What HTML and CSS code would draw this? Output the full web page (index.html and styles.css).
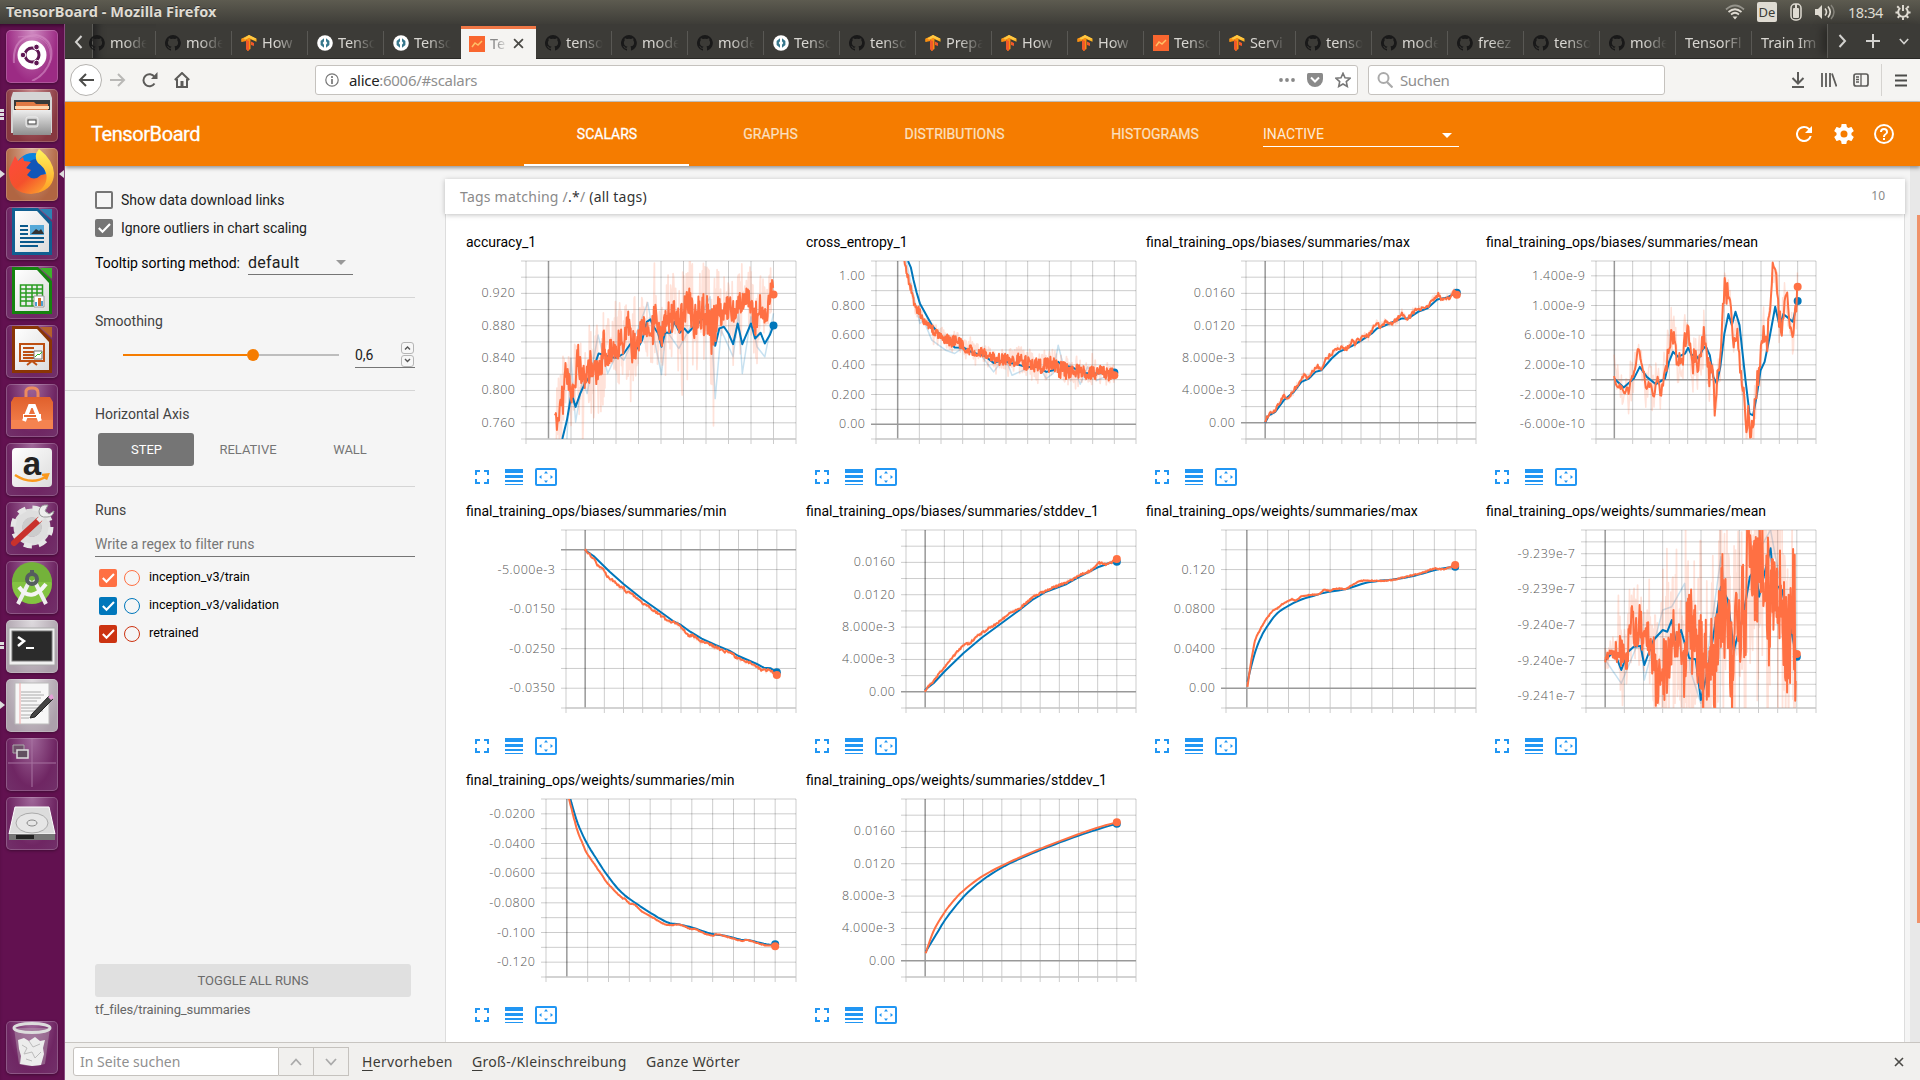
FILE: index.html
```html
<!DOCTYPE html>
<html lang="de">
<head>
<meta charset="utf-8">
<title>TensorBoard</title>
<link rel="stylesheet" href="styles.css">
</head>
<body>
<svg class="defs" aria-hidden="true">
  <defs>
    <symbol id="gh" viewBox="0 0 16 16"><path fill="#191919" d="M8 0a8 8 0 0 0-2.5 15.6c.4.1.5-.2.5-.4v-1.500c-2.200.5-2.700-.9-2.700-.9-.4-.9-.9-1.200-.9-1.200-.7-.5.1-.5.1-.5.8.1 1.200.8 1.200.8.7 1.200 1.900.9 2.300.7.1-.5.3-.9.500-1.100-1.800-.2-3.600-.9-3.600-4 0-.9.300-1.600.8-2.100-.1-.2-.4-1 .1-2.100 0 0 .7-.2 2.200.8a7.600 7.600 0 0 1 4 0c1.500-1 2.200-.8 2.200-.8.4 1.100.2 1.900.1 2.100.5.6.8 1.300.8 2.100 0 3.100-1.900 3.700-3.700 3.900.3.300.6.800.6 1.500v2.200c0 .2.100.5.600.4A8 8 0 0 0 8 0z"/></symbol>
    <symbol id="tf" viewBox="0 0 16 16"><path fill="#ffb420" d="M8 0l7.500 3.800v3L8 3.500.5 6.800v-3z"/><path fill="#fb8c10" d="M.5 3.800L5.500 2v4L.5 7zM6 3l3.500-1.500V14L6 16z"/><path fill="#f1592a" d="M5 5l3 1v10l-3-1.600zM10 6.500l3 1.500v3l-3-1z"/><path fill="#ffc843" d="M8 0l7.500 3.800-3 .9L8 2.700 5 4.500 2 4z"/></symbol>
    <symbol id="so" viewBox="0 0 16 16"><circle cx="8" cy="8" r="7.800" fill="#fff"/><path d="M7 3.300L3.600 6v4L7 12.700V9.800L5.700 8 7 6.200zM9 3.300L12.400 6v4L9 12.700V9.800L10.300 8 9 6.200z" fill="#37778c"/></symbol>
    <symbol id="tb" viewBox="0 0 16 16"><path d="M0 0h16v16H0z" fill="#f9662f"/><path d="M3 11l3-4 3 2 4-4" fill="none" stroke="#ffc067" stroke-width="1.500"/></symbol>
    <symbol id="full" viewBox="0 0 14 14"><path fill="#2196f3" d="M0 9h2v3h3v2H0zM2 5H0V0h5v2H2zm10 7V9h2v5H9v-2zM9 0h5v5h-2V2H9z"/></symbol>
    <symbol id="rows" viewBox="0 0 18 16"><path fill="#2196f3" d="M0 0h18v4H0zM0 6h18v3H0zM0 11h18v2H0zM0 15h18v1H0z"/></symbol>
    <symbol id="fit" viewBox="0 0 22 18"><rect x="1" y="1" width="20" height="16" rx="1" fill="none" stroke="#2196f3" stroke-width="2"/><path fill="#2196f3" d="M11 3l2 2.500H9zM11 15l2-2.500H9zM4 9l2.500-2v4zM18 9l-2.500-2v4z"/></symbol>
    <symbol id="tick" viewBox="0 0 18 18"><rect width="18" height="18" rx="2" fill="currentColor"/><path d="M3.800 9l3.700 3.700L15 4.900" fill="none" stroke="#fff" stroke-width="2.100"/></symbol>
    <linearGradient id="grey" x2="0" y2="1"><stop stop-color="#eee"/><stop offset="1" stop-color="#8f8f8f"/></linearGradient>
    <linearGradient id="paper" x2="1" y2="1"><stop stop-color="#fff"/><stop offset="1" stop-color="#dcdcdc"/></linearGradient>
    <linearGradient id="bag" x2="0" y2="1"><stop stop-color="#e0602c"/><stop offset="1" stop-color="#f58350"/></linearGradient>
    <linearGradient id="fox" x2="1" y2="1"><stop stop-color="#ff4a3d"/><stop offset=".5" stop-color="#f4512c"/><stop offset="1" stop-color="#ffb92e"/></linearGradient>
    <linearGradient id="tail" x2="0" y2="1"><stop stop-color="#fff45c"/><stop offset="1" stop-color="#ff9e22"/></linearGradient>
  </defs>
</svg>

<header class="panel">
  <span class="panel-title">TensorBoard - Mozilla Firefox</span>
  <div class="tray">
    <svg width="20" height="16" viewBox="0 0 20 16" fill="none" stroke-width="1.700"><path d="M1 5.500q9-8 18 0" stroke="#96948c"/><path d="M3.500 8q6.500-5.500 13 0M6 10.500q4-3.500 8 0" stroke="#dfdbd2"/><path d="M7.500 12.500h5L10 15.500z" fill="#dfdbd2"/></svg>
    <span class="lang">De</span>
    <svg width="12" height="18" viewBox="0 0 12 18"><rect x="1" y="1" width="10" height="16" rx="4" fill="none" stroke="#dfdbd2" stroke-width="1.500"/><rect x="3" y="5" width="6" height="10" rx="1" fill="#dfdbd2"/><path d="M6 1v7" stroke="#dfdbd2" stroke-width="2"/></svg>
    <svg class="speaker" width="20" height="16" viewBox="0 0 20 16"><path d="M0 5h3l4-4v14l-4-4H0z" fill="#dfdbd2"/><path d="M10 4.500q3 3.500 0 7M13 2.500q4.500 5.500 0 11" stroke="#dfdbd2" fill="none" stroke-width="1.600"/><path d="M16 1q6 7 0 14" stroke="#85837b" fill="none" stroke-width="1.500"/></svg>
    <span class="clock">18:34</span>
    <svg width="16" height="18" viewBox="0 0 18 18" fill="none" stroke="#dfdbd2"><path d="M6 4.500a5.400 5.400 0 1 0 6 0M9 1v7" stroke-width="2.200"/><path d="M4.500 4.500l-2-2M13.500 4.500l2-2M3.500 9.500H.5M14.500 9.500h3M5 13.500l-2 2M13 13.500l2 2M9 15v3" stroke-width="2.200"/></svg>
  </div>
</header>

<div class="desktop">
<aside class="launcher">
  <div class="tile t-ubuntu"><svg viewBox="0 0 52 52"><path d="M8 34Q6 8 30 6q18 4 15 24Q40 46 26 52" fill="none" stroke="#d58fc6" stroke-opacity=".6" stroke-width="2"/><path d="M12 8Q48 2 44 34" fill="none" stroke="#d58fc6" stroke-opacity=".5"/><circle cx="26" cy="26" r="14.500" fill="#fff"/><circle cx="26" cy="26" r="7" fill="none" stroke="#5e1653" stroke-width="3"/><g fill="#5e1653" stroke="#fff"><circle cx="17" cy="26" r="2.800"/><circle cx="30.500" cy="18" r="2.800"/><circle cx="30.500" cy="34" r="2.800"/></g></svg></div>
  <div class="tile t-files run3"><svg viewBox="0 0 52 52"><path d="M7 4h37l2 6v35H5V10z" fill="#d5d5d5"/><path d="M8 12h36v10H8z" fill="#393939"/><path d="M10 14h18l2 2h12v7H10z" fill="#e07a45"/><path d="M9 18h34v3H9z" fill="#ffd7b0"/><path d="M7 22h38v25H7z" fill="url(#grey)"/><rect x="20" y="29" width="12" height="10" rx="2" fill="#ccc" stroke="#eee"/><rect x="22" y="32" width="8" height="4" fill="#fff" stroke="#444"/></svg></div>
  <div class="tile t-firefox active"><svg viewBox="0 0 52 52"><circle cx="27" cy="24" r="18" fill="#0a84e0"/><path d="M24 14q10-6 15 6 2 12-11 16-10-2-10-10z" fill="#1256b8"/><path d="M5 18l4-9 3 5 5-4 1 4 7 1-5 6 5 2-4 5q7 7 14 0l5-1q3-14 4-12 6 10 0 20-6 11-19 12Q5 46 3 28q-1-6 2-10z" fill="url(#fox)"/><path d="M33 2q14 11 15 24 0 16-17 20 12-9 9-20-2-6-8-10-5-7 1-14z" fill="url(#tail)"/></svg></div>
  <div class="tile t-dark"><svg viewBox="0 0 52 52"><path d="M6 2h26l14 14v33H6z" fill="#115f91"/><path d="M9 5h22l12 13v28H9z" fill="url(#paper)"/><path d="M34 3h12v11z" fill="#2d83b3"/><path d="M14 20h8M14 24h8M14 28h8M14 32h24M14 36h24M14 40h18" stroke="#0b5a8c" stroke-width="2"/><path d="M24 19h14v10H24z" fill="#56a9d8"/><path d="M25 28l5-5 3 2 2-2 3 5z" fill="#333"/></svg></div>
  <div class="tile t-dark"><svg viewBox="0 0 52 52"><path d="M6 2h26l14 14v33H6z" fill="#15830f"/><path d="M9 5h22l12 13v28H9z" fill="url(#paper)"/><path d="M34 3h12v11z" fill="#3db22b"/><path d="M14.500 20h22v21h-22zM14 24h23M14 28h23M14 32h23M14 36h23M20 20v21M26 20v21M31 20v21" fill="none" stroke="#2a9c22" stroke-width="1.500"/><path d="M28 31h10v11H28z" fill="#fff" stroke="#999"/><path d="M29 37h2v4h-2zM35 36h2v5h-2z" fill="#4b9fd0"/><path d="M32 33h3v8h-3z" fill="#d36b2f"/></svg></div>
  <div class="tile t-dark"><svg viewBox="0 0 52 52"><path d="M6 2h26l14 14v33H6z" fill="#8a3505"/><path d="M9 5h22l12 13v28H9z" fill="url(#paper)"/><path d="M34 3h12v11z" fill="#b4622b"/><path d="M14 20h24v17H14zM21 41l5-4 5 4" fill="none" stroke="#bd4f12" stroke-width="2"/><path d="M17 24h11M17 28h11M17 31h11M17 34h11" stroke="#bd4f12" stroke-width="2"/><path d="M28 27h8v8h-8z" fill="#fff" stroke="#777"/><path d="M29 33l3-3 1 1 3-3" stroke="#3b3" fill="none"/></svg></div>
  <div class="tile t-dark"><svg viewBox="0 0 52 52"><path d="M20 15V8q1-3 5-3h2q5 0 5 5v5" fill="none" stroke="#ec8b5f" stroke-width="3"/><path d="M8 14h36l3 5v27H5V19z" fill="url(#bag)"/><path d="M5 37h42v9H5z" fill="#f58350"/><path d="M18 38l6-15h4l6 15" fill="none" stroke="#fff" stroke-width="4"/><path d="M17 33h18" stroke="#fff" stroke-width="4"/><path d="M18 33h12" stroke="#e7692f" stroke-width="2"/></svg></div>
  <div class="tile t-dark"><svg viewBox="0 0 52 52"><rect x="6" y="6" width="40" height="39" rx="4" fill="url(#paper)"/><text x="26" y="33" class="amazon">a</text><path d="M9 33q17 11 32 1M36 33l6-.500-2 5" fill="none" stroke="#f9981c" stroke-width="2.500"/></svg></div>
  <div class="tile t-dark"><svg viewBox="0 0 52 52"><circle cx="26" cy="26" r="14" fill="none" stroke="#dedede" stroke-width="9"/><circle cx="26" cy="26" r="19" fill="none" stroke="#e6e6e6" stroke-width="5" stroke-dasharray="8 6.900"/><circle cx="26" cy="26" r="10" fill="#ccc"/><path d="M8 42L33 19" stroke="#c9312b" stroke-width="6" stroke-linecap="round"/><path d="M32 20l6-6" stroke="#e8e8e8" stroke-width="5"/><path d="M42 4q-8-1-9 6 0 7 8 6 6 0 7-6l-5 3-4-3z" fill="#eee" stroke="#999"/></svg></div>
  <div class="tile t-dark"><svg viewBox="0 0 52 52"><circle cx="26" cy="24" r="20" fill="#83c341"/><path d="M6 22a20 20 0 0 1 40 0z" fill="#74b23a"/><path d="M12 44l12-24M40 44L28 20" stroke="#eee" stroke-width="4"/><path d="M13 27q12 17 27-3" fill="none" stroke="#f5f5f5" stroke-width="4"/><circle cx="26" cy="19" r="5" fill="none" stroke="#555d5f" stroke-width="4"/><path d="M26 10v5" stroke="#555d5f" stroke-width="4"/></svg></div>
  <div class="tile t-light run2"><svg viewBox="0 0 52 52"><rect x="3" y="9" width="46" height="37" fill="#efefef" stroke="#aaa"/><rect x="6" y="12" width="40" height="30" fill="#2b2b2b" stroke="#777"/><path d="M12 18l6 4-6 5" fill="none" stroke="#fff" stroke-width="2.500"/><path d="M20 29h8" stroke="#fff" stroke-width="2"/></svg></div>
  <div class="tile t-light run1"><svg viewBox="0 0 52 52"><path d="M9 5h34v41H9z" fill="#f7f7f7" stroke="#bbb"/><path d="M15 14h20M15 17h23M15 20h20M15 23h16M15 27h24M15 30h20M15 33h22M15 37h12M15 40h8" stroke="#aaa"/><path d="M14 5v41" stroke="#f1a7a7"/><path d="M26 36L43 18l4 3-18 18-5 1z" fill="#444" stroke="#222"/><path d="M42 19l4-3 2 4-3 2z" fill="#e69fd8"/></svg></div>
  <div class="tile t-dark"><svg viewBox="0 0 52 52"><path d="M26 2v48M2 26h48" stroke="#a673a0"/><path d="M7 8h11v8H7z" fill="#70506b" stroke="#aaa"/><path d="M11 13h11v8H11z" fill="#625060" stroke="#ddd" stroke-width="1.500"/></svg></div>
  <div class="tile t-dark"><svg viewBox="0 0 52 52"><path d="M9 11h34l6 27H3z" fill="#dcdcdc" stroke="#fff"/><path d="M3 38h46v6H3z" fill="#777"/><path d="M10 39h18v4H10z" fill="#222"/><ellipse cx="26" cy="27" rx="16" ry="10" fill="#e6e6e6" stroke="#aaa"/><ellipse cx="26" cy="27" rx="5" ry="3" fill="none" stroke="#888"/></svg></div>
  <div class="tile t-dark trash"><svg viewBox="0 0 52 52"><path d="M8 8l5 36q13 4 26 0l5-36z" fill="#b7a3b4" fill-opacity=".45"/><ellipse cx="26" cy="8" rx="18" ry="4.500" fill="none" stroke="#ddd" stroke-width="3"/><path d="M12 20l6-2 5 3 6-4 5 4 5-1-2 8 1 6-3 11-9 1-12-2 1-8-2-7z" fill="#ececec"/><path d="M16 25l5 3-3 6 8-2 3 6 6-6M23 21l4 6 7-3M20 39l6 2" fill="none" stroke="#bbb"/></svg></div>
</aside>

<div class="window">
  <nav class="tabs">
    <div class="tab-end"><svg width="9" height="14" viewBox="0 0 9 14"><path d="M7.500 1L2 7l5.500 6" fill="none" stroke="#d3d2cf" stroke-width="2"/></svg></div>
    <div class="tab clip"><svg><use href="#gh"/></svg><span>mode</span></div>
    <div class="tab"><svg><use href="#gh"/></svg><span>mode</span></div>
    <div class="tab"><svg><use href="#tf"/></svg><span>How</span></div>
    <div class="tab"><svg><use href="#so"/></svg><span>Tenso</span></div>
    <div class="tab last"><svg><use href="#so"/></svg><span>Tenso</span></div>
    <div class="tab on"><svg><use href="#tb"/></svg><span>Te</span><svg class="x" viewBox="0 0 10 10"><path d="M1 1l8 8M9 1L1 9" stroke="#4b4a46" stroke-width="1.600"/></svg></div>
    <div class="tab"><svg><use href="#gh"/></svg><span>tenso</span></div>
    <div class="tab"><svg><use href="#gh"/></svg><span>mode</span></div>
    <div class="tab"><svg><use href="#gh"/></svg><span>mode</span></div>
    <div class="tab"><svg><use href="#so"/></svg><span>Tenso</span></div>
    <div class="tab"><svg><use href="#gh"/></svg><span>tenso</span></div>
    <div class="tab"><svg><use href="#tf"/></svg><span>Prepa</span></div>
    <div class="tab"><svg><use href="#tf"/></svg><span>How</span></div>
    <div class="tab"><svg><use href="#tf"/></svg><span>How</span></div>
    <div class="tab"><svg><use href="#tb"/></svg><span>Tenso</span></div>
    <div class="tab"><svg><use href="#tf"/></svg><span>Servi</span></div>
    <div class="tab"><svg><use href="#gh"/></svg><span>tenso</span></div>
    <div class="tab"><svg><use href="#gh"/></svg><span>mode</span></div>
    <div class="tab"><svg><use href="#gh"/></svg><span>freez</span></div>
    <div class="tab"><svg><use href="#gh"/></svg><span>tenso</span></div>
    <div class="tab"><svg><use href="#gh"/></svg><span>mode</span></div>
    <div class="tab"><span>TensorFl</span></div>
    <div class="tab"><span>Train Im</span></div>
    <div class="tab-tools">
      <svg width="9" height="14" viewBox="0 0 9 14"><path d="M1.500 1L7 7l-5.500 6" fill="none" stroke="#d3d2cf" stroke-width="2"/></svg>
      <svg width="14" height="14" viewBox="0 0 14 14"><path d="M7 0v14M0 7h14" stroke="#d3d2cf" stroke-width="2"/></svg>
      <svg width="10" height="7" viewBox="0 0 10 7"><path d="M.8 1L5 5.500 9.200 1" fill="none" stroke="#d3d2cf" stroke-width="1.600"/></svg>
    </div>
  </nav>

  <div class="toolbar">
    <div class="back"><svg width="16" height="14" viewBox="0 0 16 14"><path d="M16 7H2M8 1L2 7l6 6" fill="none" stroke="#4c4c4a" stroke-width="2"/></svg></div>
    <svg class="nav-ic" width="16" height="14" viewBox="0 0 16 14"><path d="M0 7h14M8 1l6 6-6 6" fill="none" stroke="#b9b8b6" stroke-width="2"/></svg>
    <svg class="nav-ic" width="16" height="16" viewBox="0 0 16 16"><path d="M12.500 11.500A6 6 0 1 1 12.500 5" fill="none" stroke="#5c5b59" stroke-width="2"/><path d="M15.500 0v7H9z" fill="#5c5b59"/></svg>
    <svg class="nav-ic" width="16" height="16" viewBox="0 0 16 16"><path d="M0.800 8L8 1l7.200 7M3 7v8h10V7" fill="none" stroke="#5c5b59" stroke-width="2"/><path d="M6.500 9h3v6h-3z" fill="#5c5b59"/></svg>
    <div class="url">
      <svg width="14" height="14" viewBox="0 0 14 14"><circle cx="7" cy="7" r="6.200" fill="none" stroke="#777" stroke-width="1.200"/><path d="M7 6v5M7 3v2" stroke="#777" stroke-width="1.700"/></svg>
      <span class="address"><b>alice</b>:6006/#scalars</span>
      <svg width="16" height="4" viewBox="0 0 16 4"><g fill="#888"><circle cx="2" cy="2" r="1.900"/><circle cx="8" cy="2" r="1.900"/><circle cx="14" cy="2" r="1.900"/></g></svg>
      <svg width="16" height="14" viewBox="0 0 16 14"><path d="M1.500 0h13q1.500 0 1.500 1.500V6A8 8 0 0 1 0 6V1.500Q0 0 1.500 0z" fill="#8a8a8a"/><path d="M4 4.500L8 8.500l4-4" fill="none" stroke="#fff" stroke-width="2"/></svg>
      <svg width="16" height="16" viewBox="0 0 16 16"><path d="M8 1.300l2 4.500 5 .5-3.700 3.300 1 4.900L8 12l-4.300 2.500 1-4.900L1 6.300l5-.5z" fill="none" stroke="#777" stroke-width="1.600"/></svg>
    </div>
    <div class="search">
      <svg width="16" height="16" viewBox="0 0 16 16"><circle cx="6.500" cy="6" r="5" fill="none" stroke="#aaa" stroke-width="2"/><path d="M10 10l5.500 5.500" stroke="#aaa" stroke-width="2.200"/></svg>
      <span>Suchen</span>
    </div>
    <div class="tb-right">
      <svg width="14" height="16" viewBox="0 0 14 16"><path d="M7 0v11M1.500 6L7 11.500 12.500 6M1 15h12" fill="none" stroke="#5c5b59" stroke-width="2"/></svg>
      <svg width="16" height="14" viewBox="0 0 16 14"><path d="M1 0v14M5 0v14M9 0v14M11 .5L15.500 13.500" fill="none" stroke="#5c5b59" stroke-width="1.800"/></svg>
      <svg width="16" height="14" viewBox="0 0 16 14"><rect x="1" y="1" width="14" height="12" rx="2" fill="none" stroke="#5c5b59" stroke-width="1.700"/><path d="M8 1v12M3 4h3M3 6.500h3M3 9h3" stroke="#5c5b59" stroke-width="1.300"/></svg>
      <i class="sep"></i>
      <svg width="12" height="13" viewBox="0 0 12 13"><path d="M0 1.500h12M0 6.500h12M0 11.500h12" stroke="#4c4c4a" stroke-width="2"/></svg>
    </div>
  </div>

  <div class="app-bar">
    <h1>TensorBoard</h1>
    <div class="app-tab sel"><span>SCALARS</span></div>
    <div class="app-tab w2"><span>GRAPHS</span></div>
    <div class="app-tab w3"><span>DISTRIBUTIONS</span></div>
    <div class="app-tab w4"><span>HISTOGRAMS</span></div>
    <div class="inactive"><span>INACTIVE</span><i></i></div>
    <div class="app-icons">
      <svg width="16" height="16" viewBox="4 4 16 16"><path fill="#fff" d="M17.650 6.350A7.958 7.958 0 0 0 12 4a8 8 0 1 0 7.730 10h-2.080A6 6 0 1 1 12 6c1.660 0 3.140.690 4.220 1.780L13 11h7V4z"/></svg>
      <svg width="20" height="20" viewBox="2 2 20 20"><path fill="#fff" d="M19.430 12.980c.040-.320.070-.640.070-.980s-.030-.660-.070-.980l2.110-1.650c.190-.150.240-.420.120-.640l-2-3.460c-.120-.220-.390-.300-.610-.220l-2.490 1c-.520-.400-1.080-.730-1.690-.980l-.380-2.650A.488.488 0 0 0 14 2h-4c-.250 0-.460.180-.490.420l-.380 2.650c-.610.250-1.170.590-1.690.980l-2.490-1c-.230-.090-.490 0-.610.220l-2 3.460c-.130.220-.070.490.120.640l2.110 1.650c-.040.320-.070.650-.070.980s.030.660.070.980l-2.110 1.650c-.190.150-.240.420-.120.640l2 3.460c.120.220.390.300.610.220l2.490-1c.520.400 1.080.730 1.690.980l.380 2.650c.030.240.240.420.490.420h4c.250 0 .460-.180.490-.420l.380-2.650c.610-.250 1.170-.590 1.690-.980l2.490 1c.230.090.490 0 .610-.220l2-3.460c.120-.220.070-.490-.120-.640zM12 15.500a3.500 3.500 0 1 1 0-7 3.500 3.500 0 0 1 0 7z"/></svg>
      <svg width="20" height="20" viewBox="2 2 20 20"><path fill="#fff" d="M11 18h2v-2h-2zm1-16a10 10 0 1 0 0 20 10 10 0 0 0 0-20zm0 18a8 8 0 1 1 0-16 8 8 0 0 1 0 16zm0-14a4 4 0 0 0-4 4h2c0-1.100.900-2 2-2s2 .900 2 2c0 2-3 1.750-3 5h2c0-2.250 3-2.500 3-5a4 4 0 0 0-4-4z"/></svg>
    </div>
  </div>

  <div class="app-body">
    <aside class="side">
      <section class="sec opts">
        <label class="check"><i class="box"></i><span class="ls1">Show data download links</span></label>
        <label class="check"><svg class="gray"><use href="#tick"/></svg><span class="ls2">Ignore outliers in chart scaling</span></label>
        <div class="sort"><span>Tooltip sorting method:</span><div class="dd">default<i></i></div></div>
      </section>
      <section class="sec smooth">
        <h2>Smoothing</h2>
        <div class="slide-row">
          <div class="slider"><div class="slider-fill"></div><div class="knob"></div><div class="slider-rest"></div></div>
          <div class="num"><span>0,6</span><div class="spin"><svg viewBox="0 0 13 12"><rect x=".5" y=".5" width="12" height="11" rx="2.500" fill="#f7f7f7" stroke="#b5b5b5"/><path d="M4 7.500L6.500 5 9 7.500" fill="none" stroke="#555" stroke-width="1.400"/></svg><svg viewBox="0 0 13 12"><rect x=".5" y=".5" width="12" height="11" rx="2.500" fill="#f7f7f7" stroke="#b5b5b5"/><path d="M4 4L6.500 6.500 9 4" fill="none" stroke="#555" stroke-width="1.400"/></svg></div></div>
        </div>
      </section>
      <section class="sec axis">
        <h2>Horizontal Axis</h2>
        <div class="btns"><span class="btn step">STEP</span><span class="btn rel">RELATIVE</span><span class="btn wall">WALL</span></div>
      </section>
      <section class="runs">
        <h2>Runs</h2>
        <div class="regex">Write a regex to filter runs</div>
        <div class="run c1"><svg><use href="#tick"/></svg><i></i><span>inception_v3/train</span></div>
        <div class="run c2"><svg><use href="#tick"/></svg><i></i><span>inception_v3/validation</span></div>
        <div class="run c3"><svg><use href="#tick"/></svg><i></i><span>retrained</span></div>
      </section>
      <div class="toggle">TOGGLE ALL RUNS</div>
      <div class="logdir">tf_files/training_summaries</div>
    </aside>
    <main class="main">
      <div class="tag-head"><span class="tag-name">Tags matching /<b>.*</b>/ <b>(all tags)</b></span><span class="count">10</span></div>
      <div class="cards" id="cards"></div>
    </main>
    <div class="scroll"><div class="thumb"></div></div>
  </div>

  <footer class="find">
    <div class="find-in">In Seite suchen</div>
    <div class="find-btn"><svg width="12" height="8" viewBox="0 0 12 8"><path d="M1 7l5-5.500L11 7" fill="none" stroke="#aaa" stroke-width="1.800"/></svg></div>
    <div class="find-btn"><svg width="12" height="8" viewBox="0 0 12 8"><path d="M1 1l5 5.500L11 1" fill="none" stroke="#aaa" stroke-width="1.800"/></svg></div>
    <span class="f1"><u>H</u>ervorheben</span><span class="f2"><u>G</u>roß-/Kleinschreibung</span><span class="f3">Ganze <u>W</u>örter</span>
    <svg class="find-x" width="10" height="10" viewBox="0 0 10 10"><path d="M1 1l8 8M9 1L1 9" stroke="#4b4a46" stroke-width="1.600"/></svg>
  </footer>
</div>
</div>
<script src="charts.js"></script>
</body>
</html>
```
FILE: styles.css
```css
* { box-sizing: border-box; }
body { margin: 0; width: 1920px; height: 1080px; overflow: hidden; font-family: Roboto, sans-serif; background: #f5f5f5; }
.defs { position: absolute; width: 0; height: 0; }
svg { display: block; flex: none; }
i { font-style: normal; display: block; }

.panel { height: 24px; display: flex; justify-content: space-between; align-items: center; padding: 0 9px 0 6px; background: linear-gradient(#5d5b50, #3e3d38); font-family: "Noto Sans", sans-serif; color: #dfdbd2; }
.panel-title { font-weight: 700; font-size: 14.500px; letter-spacing: .08px; text-shadow: 0 -1px #333; line-height: 22px; padding-bottom: 2px; }
.tray { display: flex; align-items: center; font-size: 14px; }
.lang { width: 20px; height: 20px; margin: 0 13px 0 12px; border-radius: 2px; background: #dfdbd2; color: #3c3b37; text-align: center; line-height: 20px; font-size: 13px; }
.speaker { margin-left: 13px; }
.clock { margin: 0 12px 0 13px; font-size: 14.500px; letter-spacing: -.4px; padding-bottom: 1px; }

.desktop { display: flex; height: 1056px; }
.launcher { width: 65px; padding: 6px 0 6px 6px; display: flex; flex-direction: column; gap: 6px; background: #621150; border-right: 1px solid #8a4a80; box-shadow: inset 0 4px 5px -3px #2a0522; }
.tile { position: relative; width: 52px; height: 53px; flex: none; border-radius: 5px; box-shadow: inset 0 0 0 1px rgba(255,255,255,.2), 0 1px 3px rgba(0,0,0,.35); }
.tile svg { width: 52px; height: 52px; margin-top: -1px; }
.t-dark { background: radial-gradient(ellipse at 50% 0, #a0689a, #6f2663 65%, #72316a); }
.t-ubuntu { background: radial-gradient(ellipse at 50% 0, #d08bc2, #9c2b84 70%); }
.t-files { background: radial-gradient(ellipse at 50% 0, #c78a8c, #873840 75%); }
.t-firefox { background: radial-gradient(ellipse at 50% 0, #dcb29a, #b06542 75%); }
.t-light { background: radial-gradient(ellipse at 50% 0, #dedade, #aca0ab 80%); }
.trash { margin-top: auto; }
.tile::before { position: absolute; left: -6px; top: 20px; color: #ddd; }
.run3::before, .run2::before { content: ""; width: 4px; height: 11px; background: repeating-linear-gradient(#ddd 0 3px, transparent 3px 4px); }
.run2::before { height: 7px; top: 22px; }
.active::before, .run1::before { content: ""; border: solid transparent; border-width: 4px 0 4px 5px; border-left-color: #ddd; top: 22px; }
.active::after { content: ""; position: absolute; right: -6px; top: 22px; border: solid transparent; border-width: 4px 5px 4px 0; border-right-color: #ddd; }
.amazon { font: 700 33px "Liberation Sans", sans-serif; text-anchor: middle; fill: #222; }

.window { width: 1855px; display: flex; flex-direction: column; }
.tabs { height: 35px; display: flex; background: #3c3b37; font-family: "Noto Sans", sans-serif; font-size: 14.500px; color: #d8d6d1; border-bottom: 1px solid #2a2926; }
.tab-end { width: 28px; padding: 11px 0 0 9px; border-right: 1px solid #5b5a56; }
.tab { width: 76px; height: 34px; padding: 3px 0 0 9px; display: flex; align-items: center; gap: 6px; flex: none; background: linear-gradient(#595854, #595854) no-repeat; background-size: 1px 24px; background-position: right 0 top 7px; }
.tab svg { width: 16px; height: 16px; }
.tab span { width: 38px; margin-top: -2px; margin-left: -1px; letter-spacing: -.1px; white-space: nowrap; -webkit-mask-image: linear-gradient(90deg, #000 35%, transparent 97%); mask-image: linear-gradient(90deg, #000 35%, transparent 97%); }
.tab span:first-child { width: 62px; margin-left: 0; -webkit-mask-image: linear-gradient(90deg, #000 60%, transparent 98%); mask-image: linear-gradient(90deg, #000 60%, transparent 98%); }
.tab.clip { width: 63px; padding-left: 0; box-shadow: inset 10px 0 8px -6px #222; }
.tab.clip svg { margin-left: -4px; }
.tab.last { width: 77px; background: none; }
.tab.on { width: 75px; background: #f5f4f2; border-top: 3px solid #f07746; margin-top: 2px; height: 33px; padding: 0 0 1px 8px; color: #888; }
.tab.on span { width: 18px; }
.tab.on .x { width: 11px; height: 11px; margin-left: -1px; }
.tab-tools { flex: 1; margin-left: -1px; border-left: 1px solid #5b5a56; display: flex; align-items: center; justify-content: space-between; padding: 0 11px 0 10px; box-shadow: -8px 0 8px -3px #2b2a27; }

.toolbar { height: 43px; display: flex; align-items: center; background: #f5f4f2; border-bottom: 1px solid #c8c5c1; padding-left: 5px; font-family: "Noto Sans", sans-serif; }
.back { width: 32px; height: 32px; border: 1px solid #b5b3b0; border-radius: 50%; background: #fff; display: grid; place-items: center; }
.nav-ic { margin-left: 8px; margin-right: 8px; }
.url { margin-left: 117px; width: 1043px; height: 30px; border: 1px solid #c5c2be; border-radius: 3px; background: #fff; display: flex; align-items: center; padding: 0 6px 0 9px; font-size: 15px; gap: 12px; }
.address { flex: 1; margin-left: -2px; color: #8f8f8f; letter-spacing: -.3px; }
.address b { font-weight: 400; color: #222; }
.search { margin-left: 10px; width: 297px; height: 30px; border: 1px solid #c5c2be; border-radius: 3px; background: #fff; display: flex; align-items: center; gap: 7px; padding-left: 8px; color: #8f8f8f; font-size: 15px; letter-spacing: -.4px; }
.tb-right { margin-left: auto; padding-right: 13px; display: flex; align-items: center; gap: 16px; }
.sep { width: 1px; height: 32px; background: #d5d3d0; margin: 0 -3px 0 -4px; }

.app-bar { position: relative; z-index: 2; height: 64px; display: flex; background: #f57c00; color: #fff; box-shadow: 0 2px 4px rgba(0,0,0,.4); padding-left: 26px; }
h1 { margin: 0; width: 433px; font-weight: 400; -webkit-text-stroke: .3px #fff; font-size: 20px; letter-spacing: -.42px; line-height: 64px; }
.app-tab { width: 165px; text-align: center; font-size: 14px; line-height: 64px; font-weight: 400; color: #fbe0c2; -webkit-text-stroke: .2px #fbe0c2; padding-left: 1px; }
.sel { color: #fff; border-bottom: 2px solid #fff; -webkit-text-stroke: .3px #fff; height: 64px; }
.w2 { width: 162px; } .w3 { width: 206px; } .w4 { width: 195px; }
.inactive { margin: 20px 0 0 11px; width: 196px; height: 25px; border-bottom: 1px solid #fff; display: flex; justify-content: space-between; align-items: center; padding-right: 7px; font-size: 14px; color: #fdebd8; }
.inactive i { border: solid transparent; border-width: 5px 5px 0; border-top-color: #fff; margin-top: 2px; }
.app-icons { margin-left: auto; padding-right: 26px; display: flex; align-items: center; gap: 20px; }
.app-icons svg:first-child { margin-right: 2px; }

.app-body { flex: 1; display: flex; min-height: 0; background: #f5f5f5; }
.side { width: 380px; padding-top: 25px; color: #212121; display: flex; flex-direction: column; font-size: 14px; }
.sec { width: 350px; border-bottom: 1px solid #d5d5d5; padding-left: 30px; }
h2 { margin: 0; font-size: 14px; line-height: 16px; font-weight: 400; color: #424242; }
.opts { height: 107px; }
.check { display: flex; height: 18px; align-items: center; gap: 8px; margin-bottom: 10px; }
.check svg { width: 18px; height: 18px; color: #757575; }
.ls1 { letter-spacing: .04px; } .ls2 { letter-spacing: -.06px; }
.box { width: 18px; height: 18px; border: 2px solid #757575; border-radius: 2px; }
.sort { display: flex; align-items: flex-end; gap: 10px; color: #000; margin-top: 11px; }
.sort > span { width: 143px; white-space: nowrap; line-height: 16px; padding-bottom: 4px; height: 20px; }
.dd { width: 105px; height: 27px; border-bottom: 1px solid #757575; font-size: 16px; line-height: 25px; color: #212121; display: flex; justify-content: space-between; align-items: center; padding: 2px 7px 0 0; letter-spacing: .25px; }
.dd i { border: solid transparent; border-width: 5px 5px 0; border-top-color: #999; }
.smooth { height: 93px; padding-top: 15px; }
.slide-row { display: flex; height: 26px; margin-top: 13px; }
.slider { width: 216px; margin: 0 16px 0 28px; display: flex; align-items: center; }
.slider-fill { width: 124px; height: 2px; background: #f57c00; }
.knob { width: 12px; height: 12px; border-radius: 50%; background: #f57c00; }
.slider-rest { flex: 1; height: 2px; background: #bdbdbd; }
.num { width: 60px; height: 26px; border-bottom: 1px solid #757575; display: flex; justify-content: space-between; line-height: 26px; }
.spin { width: 14px; }
.spin svg { width: 13px; height: 12px; margin-bottom: 1px; }
.axis { height: 96px; padding-top: 15px; }
.btns { display: flex; margin: 11px 0 0 3px; height: 33px; font-size: 13px; color: #757575; line-height: 33px; text-align: center; }
.btn { width: 96px; }
.step { background: #757575; color: #fff; border-radius: 3px; padding-left: 1px; }
.rel { width: 108px; } .wall { width: 96px; }
.runs { padding: 15px 0 0 30px; }
.regex { width: 320px; height: 31px; margin: 8px 0 12px; border-bottom: 1px solid #757575; line-height: 33px; color: #777; padding-top: 2px; letter-spacing: -.02px; }
.run { display: flex; align-items: center; height: 18px; margin: 0 0 10px 4px; font-size: 12.600px; color: #000; }
.run svg { width: 18px; height: 18px; }
.run i { width: 16px; height: 16px; border: 1.500px solid; border-radius: 50%; margin: 0 9px 0 7px; flex: none; }
.run span { color: #000; padding-bottom: 3px; }
.c1 { color: #ff7043; } .c2 { color: #0077bb; } .c3 { color: #cc3311; }
.toggle { margin: auto 0 0 30px; width: 316px; height: 33px; flex: none; border-radius: 3px; background: #e0e0e0; color: #6b6b6b; text-align: center; line-height: 33px; font-size: 13px; }
.logdir { margin: 5px 0 24px 30px; font-size: 13px; line-height: 16px; color: #666; letter-spacing: -.12px; }

.main { width: 1460px; display: flex; flex-direction: column; padding-top: 13px; }
.tag-head { position: relative; height: 35px; flex: none; background: #fff; box-shadow: 0 1px 5px rgba(0,0,0,.25); display: flex; justify-content: space-between; align-items: center; padding: 0 20px 0 15px; font-family: "Noto Sans", sans-serif; font-size: 14px; color: #8a8a8a; letter-spacing: .23px; }
.tag-head b { font-weight: 400; color: #333; }
.count { font-size: 12px; padding-bottom: 3px; letter-spacing: 0; }
.cards { flex: 1; background: #fff; border: solid #ddd; border-width: 0 1px; display: grid; grid-template-columns: repeat(4, 340px); grid-auto-rows: 269px; align-content: start; padding: 20px 0 0 20px; }
.card h3 { margin: 0 0 10px; font-size: 14px; font-weight: 400; line-height: 17px; color: #000; white-space: nowrap; }
.plot { width: 334px; height: 186px; margin-bottom: 21px; overflow: visible; }
.plot text { font: 300 12.500px "Open Sans", sans-serif; text-anchor: end; fill: #555; letter-spacing: .5px; }
.acts { display: flex; align-items: center; padding-left: 9px; }
.acts .a { width: 14px; height: 14px; } .acts .b { width: 18px; height: 16px; margin: 0 12px 0 16px; } .acts .c { width: 22px; height: 18px; }
.scroll { width: 10px; margin-left: auto; background: #e8e8e8; }
.thumb { width: 3px; height: 708px; margin: 49px 0 0 7px; background: #f0926a; }

.find { height: 38px; border-top: 1px solid #c8c5c1; background: #f1f0ee; display: flex; align-items: center; padding-left: 8px; font-family: "Noto Sans", sans-serif; font-size: 14px; color: #3c3b37; }
.find-in { width: 206px; height: 29px; border: 1px solid #c5c2be; border-radius: 3px 0 0 3px; background: #fff; color: #909090; line-height: 28px; padding-left: 6px; letter-spacing: .02px; }
.find-btn { width: 35px; height: 29px; border: 1px solid #c5c2be; border-left: 0; display: grid; place-items: center; }
.find u { text-underline-offset: 3px; }
.f1 { margin-left: 13px; width: 110px; letter-spacing: .34px; } .f2 { width: 174px; letter-spacing: .28px; } .f3 { width: 120px; letter-spacing: .3px; }
.f1, .f2, .f3 { white-space: nowrap; }
.find-x { margin: 0 16px 0 auto; }
```
FILE: charts.js
```js
// Each chart: title, left edge of the plot, number of y intervals, y tick labels
// by interval index, index of the zero line, data extent and its series.
const P = s => s.trim().split(/\s+/).map(p => p.split(',').map(Number));
const OR = '#ff7043', BL = '#0077bb';
const charts = [
{ t: 'accuracy_1', l: 60, n: 11, lab: {2:'0.920',4:'0.880',6:'0.840',8:'0.800',10:'0.760'}, f: [187,243,775,776], pale: 3.3, min: 190,
  paleB: P('276,776 285,535 295,725 310,600 320,640 344,465 365,580 385,520 400,540 430,450 452,367 465,470 482,583 492,450 520,505 545,440 570,400 588,350 599,655 612,450 638,530 650,400 658,580 677,410 690,500 707,530 726,400'),
  blue: P('266,776 276,720 286,640 295,680 305,640 315,610 325,590 335,560 345,520 360,525 370,532 385,532 400,520 415,490 430,505 440,480 450,425 458,418 465,440 475,460 482,500 490,458 502,458 510,425 522,458 532,445 540,458 552,440 562,430 575,410 588,395 594,430 599,497 608,445 618,440 628,460 638,492 648,430 658,492 677,430 686,475 698,458 707,490 718,465 726,436'),
  env: P('250,700,840 252,650,800 258,640,730 264,620,720 268,600,710 274,515,600 280,570,640 287,620,675 293,590,650 300,480,580 310,530,635 320,560,620 326,500,610 332,550,645 342,510,605 349,510,600 355,420,570 362,490,570 370,470,550 380,465,540 390,440,540 400,450,520 410,390,500 418,430,550 425,440,555 434,420,510 442,400,475 455,415,465 462,410,505 468,320,460 474,420,475 482,435,505 490,390,475 495,330,430 502,380,480 510,350,445 518,365,445 526,370,515 532,350,450 540,320,430 548,335,450 555,355,490 565,345,460 575,340,470 585,350,460 591,385,535 600,360,505 605,320,400 612,375,440 620,355,420 630,345,415 640,365,445 652,335,415 665,315,385 672,320,400 680,335,410 686,360,500 695,340,415 704,360,430 712,360,430 718,300,370 722,290,350 726,320,345'), dots: [436,343] },
{ t: 'cross_entropy_1', l: 70, n: 12, lab: {1:'1.00',3:'0.800',5:'0.600',7:'0.400',9:'0.200',11:'0.00'}, z: 11, f: [948,243,1516,776], pale: 2.1, min: 30,
  paleB: P('1014,243 1030,345 1044,430 1052,420 1070,480 1100,510 1120,520 1140,500 1180,530 1205,575 1230,530 1245,585 1270,570 1300,550 1320,595 1335,580 1346,495 1360,570 1380,560 1394,612 1410,560 1430,600 1468,580'),
  blue: P('1018,243 1024,262 1030,300 1037,338 1044,370 1070,435 1085,460 1100,485 1110,488 1120,502 1140,503 1160,518 1185,527 1205,548 1225,540 1240,548 1250,550 1275,560 1300,560 1320,575 1335,570 1346,545 1355,555 1375,560 1400,578 1430,580 1468,577'),
  env: P('1010,240,248 1018,285,305 1026,325,345 1034,375,395 1044,382,408 1052,415,435 1062,425,445 1075,435,470 1085,450,475 1100,460,492 1112,470,508 1120,452,495 1140,482,515 1160,500,530 1180,500,530 1200,515,550 1230,520,558 1260,512,562 1290,535,580 1320,525,580 1360,545,597 1400,555,595 1440,555,602 1468,565,602'), dots: [577,585] },
{ t: 'final_training_ops/biases/summaries/max', l: 100, n: 11, lab: {2:'0.0160',4:'0.0120',6:'8.000e-3',8:'4.000e-3',10:'0.00'}, z: 10, f: [230,243,687,776], noise: 12,
  blue: P('268,728 275,706 288,695 305,660 325,635 340,605 355,595 368,575 380,570 400,535 415,515 440,498 460,480 480,460 490,445 500,440 515,430 540,415 552,415 572,395 590,385 610,358 630,352 648,338'),
  orange: P('268,728 275,700 285,698 292,680 305,648 312,655 330,620 348,580 352,598 372,555 378,568 388,540 405,512 420,500 430,508 442,480 447,492 452,468 458,480 465,462 472,470 480,450 490,428 498,445 508,425 520,430 540,402 552,415 570,385 585,388 600,362 612,342 618,362 630,350 635,358 643,328 648,345'), dots: [338,344] },
{ t: 'final_training_ops/biases/summaries/mean', l: 110, n: 12, lab: {1:'1.400e-9',3:'1.000e-9',5:'6.000e-10',7:'2.000e-10',9:'-2.000e-10',11:'-6.000e-10'}, z: 8, f: [925,243,1362,776], noise: 72,
  blue: P('961,595 980,622 1000,595 1012,560 1026,590 1044,612 1062,595 1070,545 1078,515 1088,530 1102,520 1108,503 1115,525 1122,522 1129,537 1136,510 1143,498 1151,525 1158,590 1165,610 1172,560 1180,460 1188,402 1195,435 1202,395 1210,435 1222,600 1230,700 1237,705 1245,640 1252,570 1260,545 1270,470 1281,380 1290,440 1297,402 1308,415 1316,425 1325,363'),
  orange: P('961,590 968,610 980,635 985,620 990,635 995,600 1000,595 1004,545 1010,505 1016,545 1022,600 1026,620 1032,610 1040,648 1048,590 1053,645 1060,590 1066,540 1070,490 1076,460 1084,510 1088,535 1095,560 1100,500 1108,458 1112,520 1116,560 1122,530 1127,605 1132,530 1140,455 1145,520 1150,590 1155,560 1161,680 1165,600 1170,600 1176,400 1181,300 1184,340 1188,320 1194,400 1200,500 1205,440 1212,560 1218,650 1224,740 1228,700 1233,776 1240,680 1246,600 1252,520 1258,470 1264,500 1270,400 1277,262 1282,265 1288,400 1293,460 1298,380 1302,320 1308,420 1312,440 1317,450 1322,380 1325,320'), paleO: 75, dots: [363,320] },
{ t: 'final_training_ops/biases/summaries/min', l: 100, n: 9, lab: {2:'-5.000e-3',4:'-0.0150',6:'-0.0250',8:'-0.0350'}, z: 1, f: [275,120,775,654], noise: 7,
  blue: P('316,180 335,198 370,245 400,282 440,326 480,365 510,395 525,405 545,425 570,446 600,465 630,482 650,498 690,522 705,533 720,535 733,547'),
  orange: P('316,180 325,192 335,205 343,225 355,238 365,258 380,275 393,290 400,292 406,310 412,302 425,322 435,328 442,342 450,345 470,365 485,380 500,395 512,397 525,410 542,438 550,435 570,455 600,470 620,485 632,485 645,503 670,515 690,530 700,540 718,540 733,554'), dots: [547,555] },
{ t: 'final_training_ops/biases/summaries/stddev_1', l: 100, n: 11, lab: {2:'0.0160',4:'0.0120',6:'8.000e-3',8:'4.000e-3',10:'0.00'}, z: 10, f: [1015,120,1516,654], noise: 6,
  blue: P('1056,600 1075,580 1100,543 1140,490 1180,443 1220,403 1260,362 1290,330 1320,305 1365,282 1390,262 1436,230 1460,218 1473,215'),
  orange: P('1056,604 1064,590 1075,575 1085,555 1100,530 1115,505 1130,480 1145,458 1152,463 1170,438 1190,420 1215,398 1240,370 1265,352 1290,322 1310,308 1340,290 1365,278 1390,258 1420,240 1436,218 1450,223 1462,218 1473,208'), dots: [215,207] },
{ t: 'final_training_ops/weights/summaries/max', l: 80, n: 9, lab: {2:'0.120',4:'0.0800',6:'0.0400',8:'0.00'}, z: 8, f: [208,120,754,654], noise: 3, curve: 1,
  blue: P('255,575 262,535 272,485 285,440 300,405 320,370 345,347 370,330 400,317 430,306 470,297 510,280 540,273 580,267 620,257 665,240 708,230'),
  orange: P('255,592 260,540 266,490 272,450 280,425 290,400 300,380 310,362 320,355 332,342 352,328 360,332 372,320 390,315 412,312 422,300 435,303 445,296 470,296 485,283 502,273 525,272 560,272 590,264 620,254 640,247 665,235 680,238 700,230 708,225'), dots: [230,225] },
{ t: 'final_training_ops/weights/summaries/mean', l: 100, n: 15, lab: {2:'-9.239e-7',5:'-9.239e-7',8:'-9.240e-7',11:'-9.240e-7',14:'-9.241e-7'}, f: [993,120,1494,654], pale: 2.8, min: 120,
  paleB: P('1035,510 1070,580 1112,440 1120,570 1160,360 1180,350 1208,280 1220,540 1243,640 1287,200 1315,500 1362,200 1395,120 1435,420 1452,500'),
  blue: P('1035,510 1050,490 1060,505 1070,540 1085,485 1097,470 1112,468 1120,525 1140,450 1160,420 1170,425 1180,390 1188,450 1200,420 1208,460 1218,505 1232,508 1243,630 1255,560 1270,440 1287,290 1302,330 1315,480 1335,380 1350,260 1362,235 1370,320 1380,260 1395,175 1402,280 1420,300 1435,390 1452,500'),
  env: P('1035,490,520 1045,480,500 1055,460,515 1062,420,530 1070,440,540 1082,475,550 1090,325,450 1100,380,490 1110,325,470 1120,400,490 1130,390,490 1138,430,590 1146,440,680 1155,470,590 1168,420,670 1180,370,520 1190,280,510 1200,420,560 1206,440,630 1212,310,580 1225,230,560 1235,400,600 1241,270,620 1247,380,730 1256,370,640 1264,390,640 1273,350,730 1280,340,570 1287,150,510 1297,220,520 1306,330,580 1311,350,720 1318,310,510 1325,290,590 1335,210,430 1340,190,640 1345,40,360 1355,170,370 1368,70,440 1378,90,390 1385,60,400 1391,140,660 1396,190,430 1405,150,440 1418,80,500 1425,240,580 1430,280,640 1437,300,600 1442,210,520 1446,50,540 1450,360,760'), dots: [500,492] },
{ t: 'final_training_ops/weights/summaries/min', l: 80, n: 12, lab: {1:'-0.0200',3:'-0.0400',5:'-0.0600',7:'-0.0800',9:'-0.100',11:'-0.120'}, f: [231,117,775,651], noise: 2, curve: 1,
  blue: P('284,117 300,190 320,250 340,295 365,347 395,397 430,433 460,460 495,487 520,493 550,503 590,521 620,527 655,539 670,540 705,551 729,556'),
  orange: P('281,117 290,165 300,215 312,255 320,280 335,310 355,350 365,370 395,412 402,415 412,430 425,435 440,455 455,466 492,494 522,494 545,507 555,507 575,520 595,527 605,523 655,542 670,540 705,555 729,557'), dots: [553,559] },
{ t: 'final_training_ops/weights/summaries/stddev_1', l: 100, n: 11, lab: {2:'0.0160',4:'0.0120',6:'8.000e-3',8:'4.000e-3',10:'0.00'}, z: 10, f: [1015,117,1516,651], noise: 0, curve: 1,
  blue: P('1058,575 1080,525 1100,480 1125,435 1150,397 1185,357 1230,318 1280,286 1330,258 1380,232 1430,209 1473,191'),
  orange: P('1058,580 1065,550 1078,505 1100,455 1120,420 1140,392 1180,350 1230,313 1280,282 1330,254 1380,228 1430,204 1473,187'), dots: [191,187] }
];

let seed = 7;
const rnd = () => (seed = (seed * 16807) % 2147483647) / 2147483647;
const R = 330, H = 178;

// Linear interpolation of every column of `pts` at x.
function at(pts, x) {
  let i = 1;
  while (i < pts.length - 1 && pts[i][0] < x) i++;
  const a = pts[i - 1], b = pts[i], k = (x - a[0]) / (b[0] - a[0]);
  return a.map((v, j) => v + (b[j] - v) * k);
}

// Catmull-Rom resampling, for the series that have no corners.
function rounded(pts) {
  const out = [];
  for (let i = 0; i < pts.length - 1; i++) {
    const a = pts[Math.max(0, i - 1)], b = pts[i], c = pts[i + 1], d = pts[Math.min(pts.length - 1, i + 2)];
    for (let k = 0; k < 1; k += .2)
      out.push([0, 1].map(j => .5 * (2 * b[j] + (c[j] - a[j]) * k + (2 * a[j] - 5 * b[j] + 4 * c[j] - d[j]) * k * k + (3 * b[j] - a[j] - 3 * c[j] + d[j]) * k * k * k)));
  }
  out.push(pts[pts.length - 1]);
  return out;
}

function draw(c, idx) {
  const [x0, y0, x1, y1] = c.f;
  const sx = x => c.l + (x - x0) / (x1 - x0) * (R - c.l);
  const sy = y => (y - y0) / (y1 - y0) * H;
  const path = (pts, col, w, op) => `<path d="M${pts.map(p => sx(p[0]).toFixed(1) + ' ' + sy(p[1]).toFixed(1)).join('L')}" fill="none" stroke="${col}" stroke-width="${w}" stroke-opacity="${op}" stroke-linejoin="round"/>`;
  let g = '', s = '';
  for (let i = 0; i <= 12; i++) {
    const x = c.l + i * (R - c.l) / 12;
    g += `<path d="M${x} 0V${i === 1 ? H : H + 5}" stroke="${i === 1 ? '#999' : '#000'}" stroke-opacity="${i === 1 ? 1 : .2}" stroke-width="${i === 1 ? 1.5 : 1}"/>`;
  }
  for (let i = 0; i <= c.n; i++) {
    const y = i * H / c.n, z = i === c.z;
    g += `<path d="M${c.l - 5} ${y}H${R}" stroke="${z ? '#999' : '#000'}" stroke-opacity="${z ? 1 : .2}" stroke-width="${z ? 1.5 : 1}"/>`;
    if (c.lab[i]) g += `<text x="${c.l - 10.5}" y="${y + 4}">${c.lab[i]}</text>`;
  }
  g += `<path d="M${c.l} ${H}H${R}" stroke="#ccc" stroke-width="1.500"/>`;
  if (c.paleB) s += path(c.paleB, BL, 1.5, .22);
  let main = [];
  if (c.env) {
    const raw = [], end = c.env[c.env.length - 1][0];
    for (let x = c.env[0][0]; x <= end; x += 1.1) {
      const [, lo, hi] = at(c.env, x), m = (lo + hi) / 2, d = hi - lo;
      main.push([x, lo + d * rnd()]);
      const w = Math.max(d * c.pale, Math.min(c.min, d * 4));
      raw.push([x, m + (rnd() - .5) * w * (rnd() > .85 ? 1.3 : .8)]);
    }
    s += path(raw, OR, 1.7, .2);
  } else {
    const pts = c.curve ? rounded(c.orange) : c.orange, end = pts[pts.length - 1][0];
    if (c.noise) {
      for (let x = pts[0][0]; x < end; x += 1.8) main.push([x, at(pts, x)[1] + (rnd() - .5) * c.noise * (c.paleO && x < 1060 ? .4 : 1)]);
      main.push(pts[pts.length - 1]);
      s += path(main.map(p => [p[0], p[1] + (rnd() - .5) * (c.paleO || c.noise) * 1.800]), OR, 1.5, .2);
    } else main = pts;
  }
  s += path(c.curve ? rounded(c.blue) : c.blue, BL, 2, 1);
  const ex = sx(x0 + (x1 - x0) * 11 / 12);
  s += `<circle cx="${ex}" cy="${sy(c.dots[0])}" r="4" fill="${BL}"/>`;
  s += path(main, OR, 2, 1) + `<circle cx="${ex}" cy="${sy(c.dots[1])}" r="4" fill="${OR}"/>`;
  return `<article class="card"><h3>${c.t}</h3><svg class="plot" viewBox="0 0 334 186"><clipPath id="p${idx}"><rect x="${c.l}" y="0" width="${R - c.l}" height="${H}"/></clipPath>${g}<g clip-path="url(#p${idx})">${s}</g></svg><div class="acts"><svg class="a"><use href="#full"/></svg><svg class="b"><use href="#rows"/></svg><svg class="c"><use href="#fit"/></svg></div></article>`;
}
document.getElementById('cards').innerHTML = charts.map(draw).join('');
```
